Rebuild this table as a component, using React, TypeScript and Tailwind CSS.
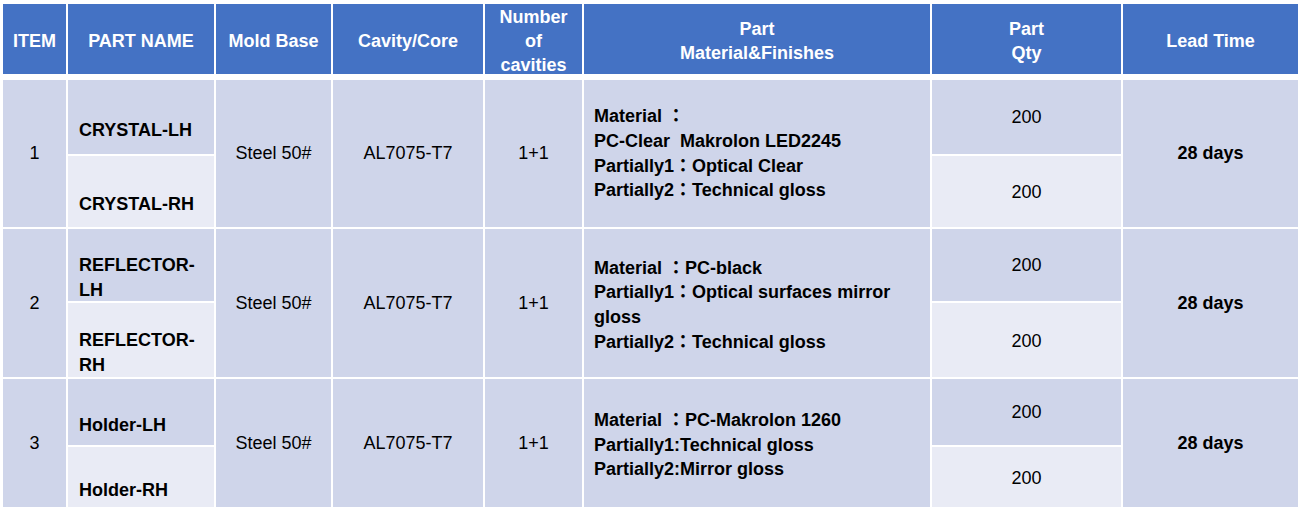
import * as React from "react";

// Column widths measured off the slide table, 2px white gutters between cells
const COLS = "grid-cols-[63px_146px_115px_150px_97px_346px_189px_175px]";

const DARK = "bg-[#cfd5ea]";
const LIGHT = "bg-[#e9ebf5]";

/** Full-width colon, kept from stretching the line box. */
function Colon() {
  return <span className="font-['Noto_Sans_CJK_JP'] leading-none">：</span>;
}

type Group = {
  item: string;
  rows: string;
  matPad: string;
  parts: [string, string];
  material: React.ReactNode[];
  qty: [string, string];
};

const GROUPS: Group[] = [
  {
    item: "1",
    rows: "grid-rows-[74px_71px]",
    matPad: "pt-[0px]",
    parts: ["CRYSTAL-LH", "CRYSTAL-RH"],
    material: [
      <>
        Material <Colon />
      </>,
      <>{"PC-Clear\u00a0 Makrolon LED2245"}</>,
      <>
        Partially1
        <Colon />
        Optical Clear
      </>,
      <>
        Partially2
        <Colon />
        Technical gloss
      </>,
    ],
    qty: ["200", "200"],
  },
  {
    item: "2",
    rows: "grid-rows-[72px_74px]",
    matPad: "pt-[4px]",
    parts: ["REFLECTOR-LH", "REFLECTOR-RH"],
    material: [
      <>
        Material <Colon />
        PC-black
      </>,
      <>
        Partially1
        <Colon />
        Optical surfaces mirror gloss
      </>,
      <>
        Partially2
        <Colon />
        Technical gloss
      </>,
    ],
    qty: ["200", "200"],
  },
  {
    item: "3",
    rows: "grid-rows-[66px_60px]",
    matPad: "pt-[4px]",
    parts: ["Holder-LH", "Holder-RH"],
    material: [
      <>
        Material <Colon />
        PC-Makrolon 1260
      </>,
      <>Partially1:Technical gloss</>,
      <>Partially2:Mirror gloss</>,
    ],
    qty: ["200", "200"],
  },
];

function HeadCell({ children }: { children: React.ReactNode }) {
  return (
    <div className="flex items-center justify-center bg-[#4472c4] pt-[4px] text-center text-[18px] font-bold leading-[24px] text-white">
      <div>{children}</div>
    </div>
  );
}

function GroupRows({ g }: { g: Group }) {
  const center = `${DARK} row-span-2 flex items-center justify-center text-center`;
  return (
    <div className={`grid ${COLS} ${g.rows} gap-[2px]`}>
      <div className={center}>{g.item}</div>
      <div className={`${DARK} flex items-center pl-[11px] pt-[26px] font-bold`}>
        {g.parts[0]}
      </div>
      <div className={center}>Steel 50#</div>
      <div className={center}>AL7075-T7</div>
      <div className={center}>1+1</div>
      <div
        className={`${DARK} row-span-2 flex items-center pl-[10px] pr-[10px] font-bold ${g.matPad}`}
      >
        <div>
          {g.material.map((line, i) => (
            <div key={i}>{line}</div>
          ))}
        </div>
      </div>
      <div className={`${DARK} flex items-center justify-center pt-[1px]`}>{g.qty[0]}</div>
      <div className={`${center} font-bold`}>28 days</div>
      <div className={`${LIGHT} flex items-center pl-[11px] pt-[26px] font-bold`}>
        {g.parts[1]}
      </div>
      <div className={`${LIGHT} flex items-center justify-center pt-[2px]`}>{g.qty[1]}</div>
    </div>
  );
}

export default function App() {
  return (
    <div className="h-[511px] w-[1302px] bg-white pl-[3px] pt-[4px] font-['Liberation_Sans','Noto_Sans_CJK_JP',sans-serif] text-[18px] leading-[24.6px] text-black">
      {/* Header */}
      <div className={`grid ${COLS} grid-rows-[70px] gap-x-[2px]`}>
        <HeadCell>ITEM</HeadCell>
        <HeadCell>PART NAME</HeadCell>
        <HeadCell>Mold Base</HeadCell>
        <HeadCell>Cavity/Core</HeadCell>
        <HeadCell>
          Number
          <br />
          of
          <br />
          cavities
        </HeadCell>
        <HeadCell>
          Part
          <br />
          Material&amp;Finishes
        </HeadCell>
        <HeadCell>
          Part
          <br />
          Qty
        </HeadCell>
        <HeadCell>Lead Time</HeadCell>
      </div>

      {/* Body */}
      <div className="mt-[6px] flex flex-col gap-[2px]">
        {GROUPS.map((g) => (
          <GroupRows key={g.item} g={g} />
        ))}
      </div>
    </div>
  );
}
